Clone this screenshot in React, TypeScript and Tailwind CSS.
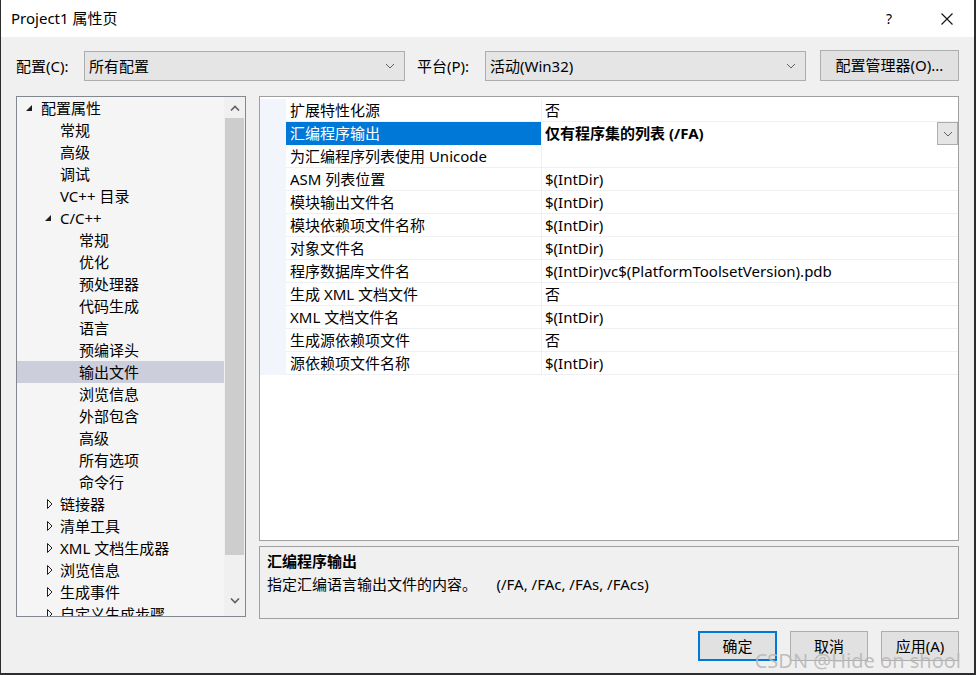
import React from "react";

const FONT = '"Segoe UI", "Noto Sans", "Noto Sans CJK SC", sans-serif';

type TreeItem = { label: string; level: number; state?: "open" | "closed"; selected?: boolean };

const tree: TreeItem[] = [
  { label: "配置属性", level: 0, state: "open" },
  { label: "常规", level: 1 },
  { label: "高级", level: 1 },
  { label: "调试", level: 1 },
  { label: "VC++ 目录", level: 1 },
  { label: "C/C++", level: 1, state: "open" },
  { label: "常规", level: 2 },
  { label: "优化", level: 2 },
  { label: "预处理器", level: 2 },
  { label: "代码生成", level: 2 },
  { label: "语言", level: 2 },
  { label: "预编译头", level: 2 },
  { label: "输出文件", level: 2, selected: true },
  { label: "浏览信息", level: 2 },
  { label: "外部包含", level: 2 },
  { label: "高级", level: 2 },
  { label: "所有选项", level: 2 },
  { label: "命令行", level: 2 },
  { label: "链接器", level: 1, state: "closed" },
  { label: "清单工具", level: 1, state: "closed" },
  { label: "XML 文档生成器", level: 1, state: "closed" },
  { label: "浏览信息", level: 1, state: "closed" },
  { label: "生成事件", level: 1, state: "closed" },
  { label: "自定义生成步骤", level: 1, state: "closed" },
];

const props: [string, string][] = [
  ["扩展特性化源", "否"],
  ["汇编程序输出", "仅有程序集的列表 (/FA)"],
  ["为汇编程序列表使用 Unicode", ""],
  ["ASM 列表位置", "$(IntDir)"],
  ["模块输出文件名", "$(IntDir)"],
  ["模块依赖项文件名称", "$(IntDir)"],
  ["对象文件名", "$(IntDir)"],
  ["程序数据库文件名", "$(IntDir)vc$(PlatformToolsetVersion).pdb"],
  ["生成 XML 文档文件", "否"],
  ["XML 文档文件名", "$(IntDir)"],
  ["生成源依赖项文件", "否"],
  ["源依赖项文件名称", "$(IntDir)"],
];

function ChevronDown({ className = "" }: { className?: string }) {
  return (
    <svg width="10" height="6" viewBox="0 0 10 6" className={className}>
      <path d="M1 1 L5 5 L9 1" fill="none" stroke="#606060" strokeWidth="1" />
    </svg>
  );
}

function Combo({ text, width }: { text: string; width: string }) {
  return (
    <div className={`${width} h-[30px] border border-[#adadad] bg-[#e5e5e5] flex items-center pl-[4px] pr-[9px]`}>
      <span className="flex-1 text-[15px] text-black">{text}</span>
      <ChevronDown />
    </div>
  );
}

function OpenArrow() {
  return (
    <svg width="7" height="7" viewBox="0 0 7 7">
      <path d="M6 0 L6 6 L0 6 Z" fill="#1e1e1e" />
    </svg>
  );
}

function ClosedArrow() {
  return (
    <svg width="6" height="10" viewBox="0 0 6 10">
      <path d="M0.5 0.5 L5 5 L0.5 9.5 Z" fill="none" stroke="#1e1e1e" strokeWidth="1" />
    </svg>
  );
}

export default function App() {
  return (
    <div className="w-[976px] h-[675px] bg-[#2d2d30] overflow-hidden" style={{ fontFamily: FONT }}>
      <div className="w-[973px] h-[673px] ml-[1px] flex flex-col bg-[#f0f0f0] text-black">
        {/* Title bar */}
        <div className="h-[37px] bg-white flex items-center pl-[10px] shrink-0">
          <span className="text-[15px] flex-1">Project1 属性页</span>
          <span className="text-[14px] w-[10px] mr-[45px]">?</span>
          <svg width="12" height="12" viewBox="0 0 12 12" className="mr-[21px]">
            <path d="M0.5 0.5 L11.5 11.5 M11.5 0.5 L0.5 11.5" stroke="#111" strokeWidth="1.1" />
          </svg>
        </div>

        <div className="flex-1 flex flex-col pl-[15px] pr-[15px]">
          {/* Config row */}
          <div className="flex items-center mt-[14px] h-[30px]">
            <span className="text-[15px] w-[68px]">配置(C):</span>
            <Combo text="所有配置" width="w-[321px]" />
            <span className="text-[15px] ml-[12px] w-[68px]">平台(P):</span>
            <Combo text="活动(Win32)" width="w-[321px]" />
            <div className="ml-[14px] w-[139px] h-[31px] -mt-[2px] border border-[#adadad] bg-[#e1e1e1] flex items-center justify-center text-[15px]">
              配置管理器(O)...
            </div>
          </div>

          {/* Main area */}
          <div className="flex mt-[15px] gap-[13px]">
            {/* Tree */}
            <div className="w-[230px] h-[521px] border border-[#828790] bg-[#f5f5f5] flex overflow-hidden">
              <div className="flex-1 flex flex-col overflow-hidden">
                {tree.map((it, i) => (
                  <div
                    key={i}
                    className={`h-[22px] shrink-0 flex items-center text-[15px] relative ${it.selected ? "bg-[#cccedb]" : ""}`}
                    style={{ paddingLeft: 24 + it.level * 19 }}
                  >
                    {it.state && (
                      <span className="absolute flex items-center" style={{ left: it.state === "open" ? 9 + it.level * 19 : 11 + it.level * 19 }}>
                        {it.state === "open" ? <OpenArrow /> : <ClosedArrow />}
                      </span>
                    )}
                    <span className="whitespace-nowrap">{it.label}</span>
                  </div>
                ))}
              </div>
              <div className="w-[21px] flex flex-col bg-[#f0f0f0]">
                <div className="h-[21px] shrink-0 flex items-center justify-center">
                  <svg width="10" height="6" viewBox="0 0 10 6">
                    <path d="M1 5.5 L5 1.5 L9 5.5" fill="none" stroke="#606060" strokeWidth="1.6" />
                  </svg>
                </div>
                <div className="h-[437px] shrink-0 bg-[#cdcdcd] mx-[1px]"></div>
                <div className="flex-1"></div>
                <div className="h-[21px] shrink-0 flex items-center justify-center mb-[5px]">
                  <svg width="10" height="6" viewBox="0 0 10 6">
                    <path d="M1 0.5 L5 4.5 L9 0.5" fill="none" stroke="#606060" strokeWidth="1.6" />
                  </svg>
                </div>
              </div>
            </div>

            {/* Right column */}
            <div className="flex-1 flex flex-col">
              <div className="h-[445px] border border-[#a0a0a0] bg-white pt-[2px]">
                {props.map(([name, value], i) => {
                  const sel = i === 1;
                  return (
                    <div key={i} className="h-[23px] flex">
                      <div className="w-[26px] bg-[#f2f5fb]"></div>
                      <div
                        className={`w-[256px] flex items-center pl-[4px] text-[15px] border-r border-[#eef0f4] ${
                          sel ? "bg-[#0078d7] text-white" : "border-b"
                        }`}
                      >
                        <span className="whitespace-nowrap">{name}</span>
                      </div>
                      <div className={`flex-1 flex items-center pl-[3px] text-[15px] ${sel ? "" : "border-b border-[#eef0f4]"}`}>
                        <span className={`flex-1 whitespace-nowrap ${sel ? "font-bold" : ""}`}>{value}</span>
                        {sel && (
                          <div className="w-[21px] h-[23px] border border-[#adadad] bg-[#e5e5e5] flex items-center justify-center">
                            <ChevronDown />
                          </div>
                        )}
                      </div>
                    </div>
                  );
                })}
              </div>
              <div className="mt-[5px] h-[73px] border border-[#a0a0a0] bg-[#f0f0f0] px-[7px] pt-[3px]">
                <div className="text-[15px] font-bold h-[23px] flex items-center">汇编程序输出</div>
                <div className="text-[15px] h-[23px] flex items-center whitespace-pre">
                  指定汇编语言输出文件的内容。     (/FA, /FAc, /FAs, /FAcs)
                </div>
              </div>
            </div>
          </div>

          {/* Buttons */}
          <div className="flex justify-end gap-[13px] mt-[12px] relative">
            <div className="w-[79px] h-[30px] border-2 border-[#0078d7] bg-[#e1e1e1] flex items-center justify-center text-[15px]">确定</div>
            <div className="w-[78px] h-[30px] border border-[#adadad] bg-[#e1e1e1] flex items-center justify-center text-[15px]">取消</div>
            <div className="w-[78px] h-[30px] border border-[#adadad] bg-[#e1e1e1] flex items-center justify-center text-[15px]">应用(A)</div>
            <div className="absolute right-[-2px] top-[15px] text-[20px] text-[#b8b8b8]/90 whitespace-nowrap pointer-events-none" style={{ fontFamily: '"Noto Sans", sans-serif' }}>
              CSDN @Hide on shool
            </div>
          </div>
        </div>
      </div>
    </div>
  );
}
